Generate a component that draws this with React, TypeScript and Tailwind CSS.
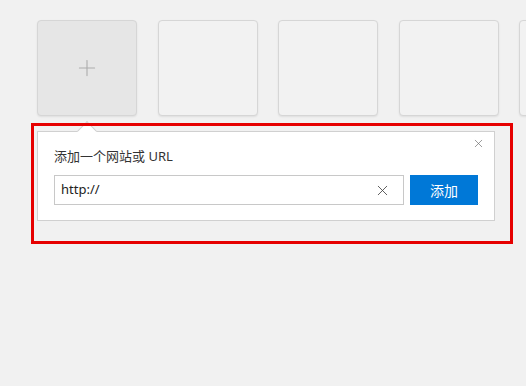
import { X, Plus } from "lucide-react";

const FONT = "font-['Segoe_UI','Noto_Sans','Noto_Sans_CJK_SC',sans-serif]";

function Tile({ active }: { active?: boolean }) {
  return (
    <div
      className={`flex h-[96px] w-[100px] shrink-0 items-center justify-center rounded-[4px] border border-[#d6d6d6] shadow-[0_1px_2px_rgba(0,0,0,0.08)] ${
        active ? "bg-[#e6e6e6]" : "bg-[#f2f2f2]"
      }`}
    >
      {active && <Plus className="h-[26px] w-[26px] text-[#ababab]" strokeWidth={1} />}
    </div>
  );
}

export default function App() {
  return (
    <div className={`relative h-[386px] w-[526px] overflow-hidden bg-[#f1f1f1] ${FONT}`}>
      <div className="flex gap-[20.5px] pl-[37px] pt-[20px]">
        <Tile active />
        <Tile />
        <Tile />
        <Tile />
        <Tile />
      </div>

      <div className="relative ml-[37px] mt-[15px] h-[90px] w-[458px] border border-[#d0d0d0] bg-white px-[16px] pt-[15px]">
        <div className="absolute -top-[8px] left-[42px] h-[14px] w-[14px] rotate-45 border-l border-t border-[#d0d0d0] bg-white" />
        <button className="absolute right-[9px] top-[5px] flex h-[13px] w-[13px] items-center justify-center text-[#666]">
          <X className="h-[13px] w-[13px]" strokeWidth={1.2} />
        </button>
        <p className="text-[13px] leading-[18px] text-[#333]">添加一个网站或 URL</p>
        <div className="mt-[10px] flex items-center gap-[6px]">
          <div className="flex h-[30px] w-[350px] items-center border border-[#c8c8c8] bg-white pl-[6px] pr-[12px]">
            <span className="flex-1 text-[13px] text-[#222]">http://</span>
            <X className="h-[17px] w-[17px] text-[#444]" strokeWidth={1.2} />
          </div>
          <button className="flex h-[30px] w-[68px] items-center justify-center bg-[#0078d7] text-[14px] text-white">
            添加
          </button>
        </div>
      </div>

      <div className="pointer-events-none absolute left-[31px] top-[123px] h-[121px] w-[482px] border-[3px] border-[#e60000]" />
    </div>
  );
}
